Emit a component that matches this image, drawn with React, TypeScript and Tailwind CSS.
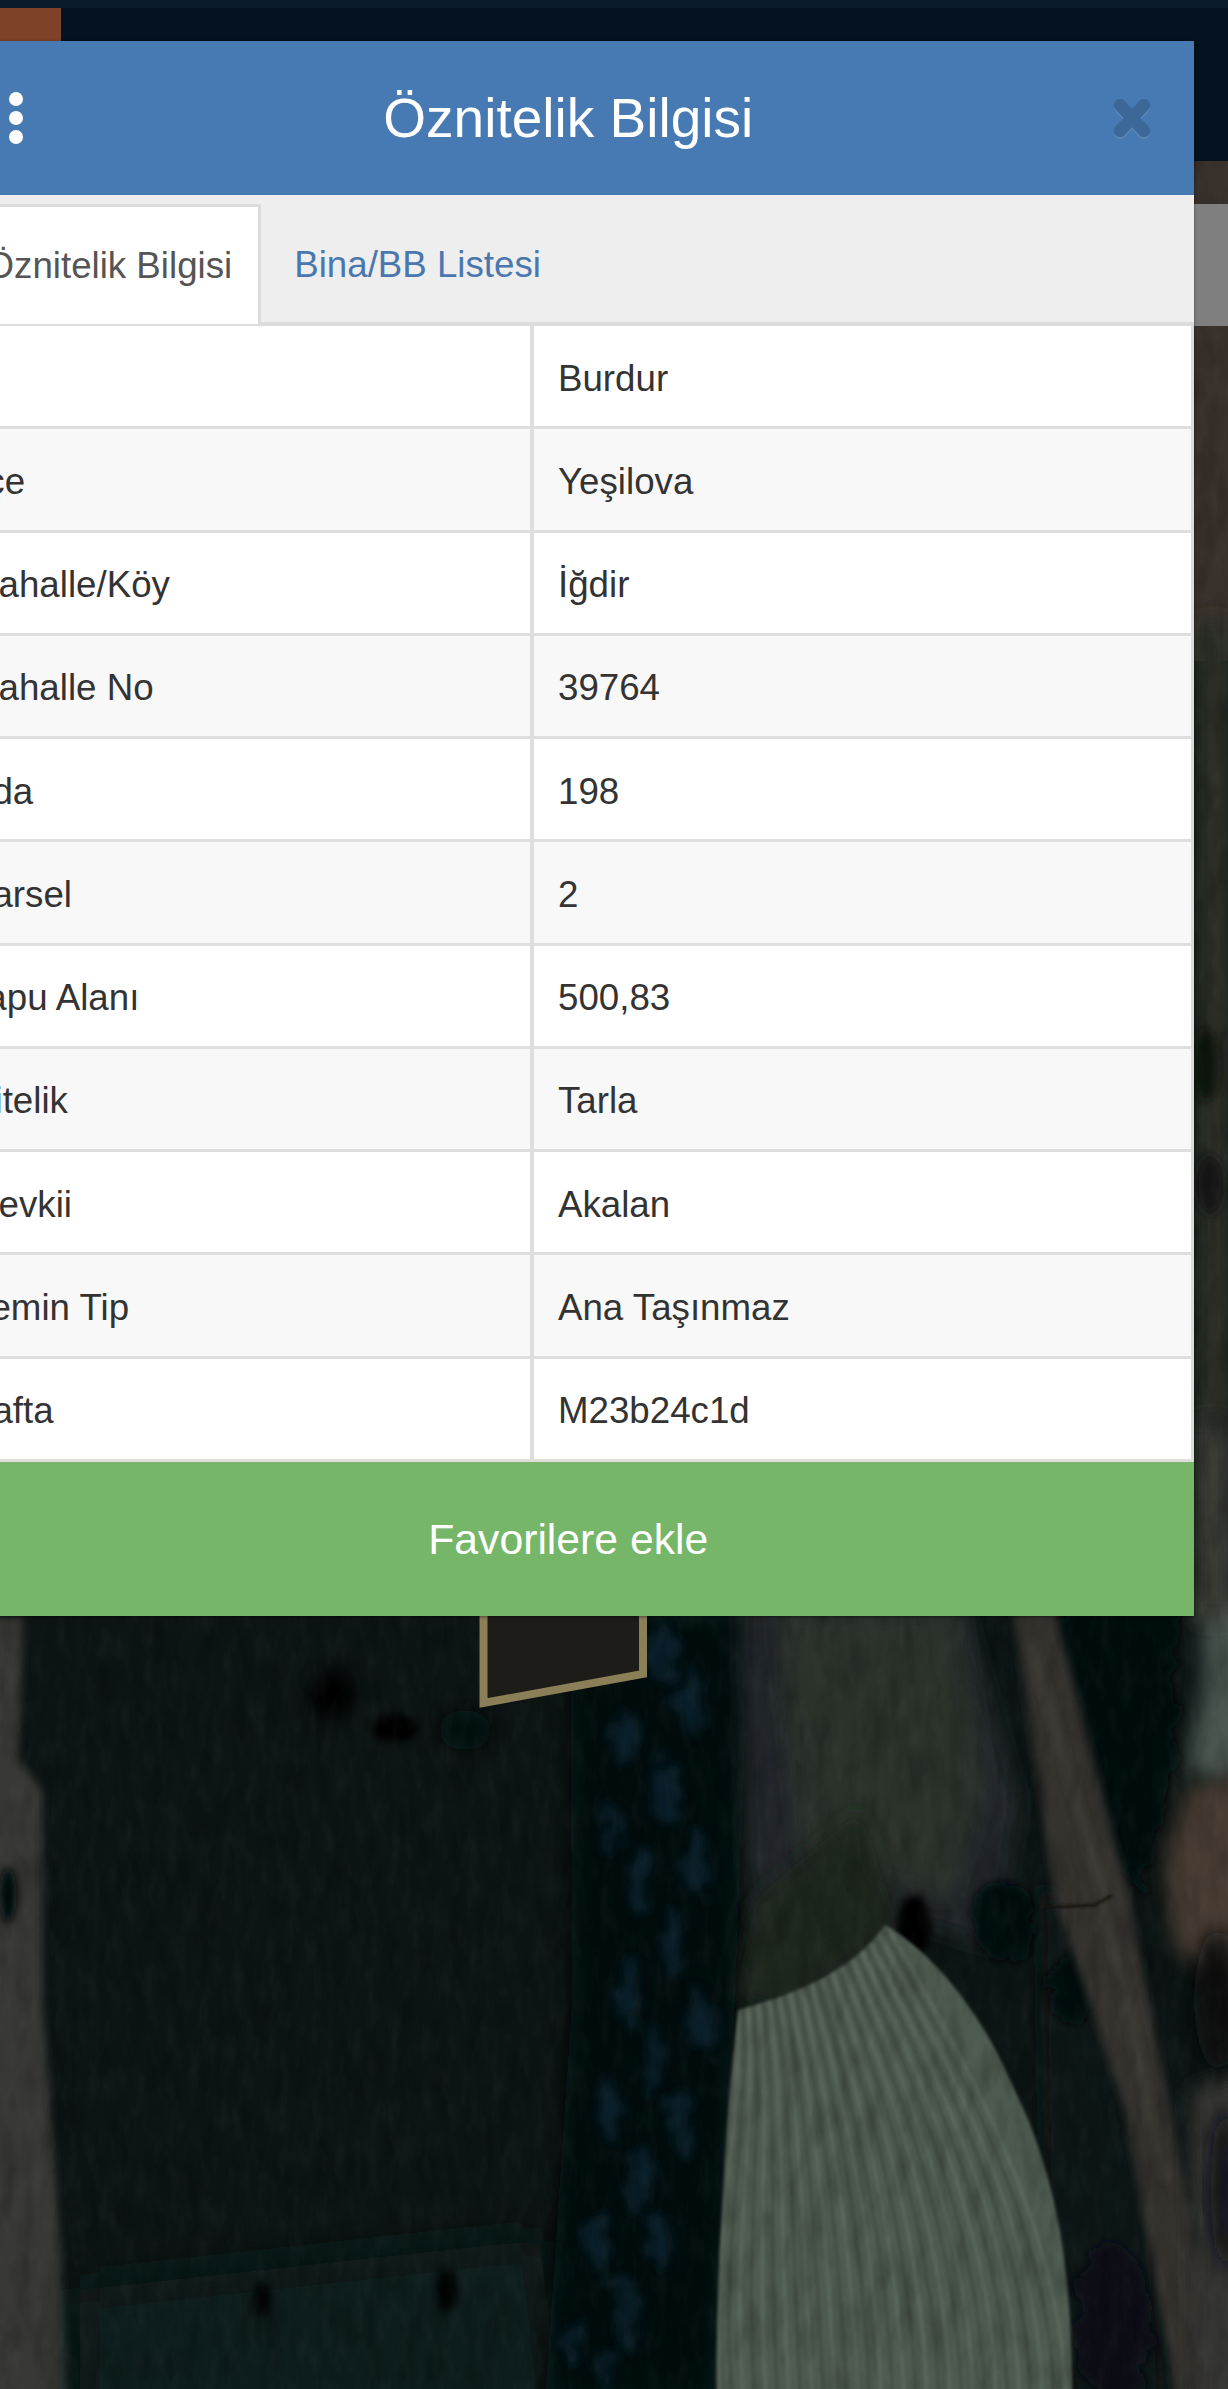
import React from "react";

const rows: [string, string][] = [
  ["İl", "Burdur"],
  ["İlçe", "Yeşilova"],
  ["Mahalle/Köy", "İğdir"],
  ["Mahalle No", "39764"],
  ["Ada", "198"],
  ["Parsel", "2"],
  ["Tapu Alanı", "500,83"],
  ["Nitelik", "Tarla"],
  ["Mevkii", "Akalan"],
  ["Zemin Tip", "Ana Taşınmaz"],
  ["Pafta", "M23b24c1d"],
];

function stripes() {
  const out: React.ReactElement[] = [];
  const n = 30;
  for (let i = 0; i <= n; i++) {
    const t = i / n;
    const sx = 738 + 150 * t;
    const sy = 2012 - 85 * t;
    const ex = 720 + 345 * t;
    const light = i % 2 === 0;
    out.push(
      <path
        key={i}
        d={`M${sx} ${sy} C${sx + 5 + 70 * t} ${sy + 130}, ${ex - 12 + 10 * t} ${2230}, ${ex} 2395`}
        fill="none"
        stroke={light ? "#5f6c62" : "#3d483f"}
        strokeWidth={light ? 3 : 3.5}
        opacity={0.7}
      />
    );
  }
  return out;
}

const treeSpots: [number, number, number, number][] = [
  [660, 1650, 14, 30], [690, 1700, 12, 34], [625, 1740, 13, 30], [665, 1790, 11, 36],
  [695, 1860, 13, 32], [640, 1880, 11, 36], [610, 1830, 9, 26], [675, 1945, 12, 34],
  [630, 1990, 12, 36], [700, 2020, 11, 30], [650, 2060, 10, 38], [610, 2110, 10, 30],
  [680, 2120, 10, 32], [640, 2180, 11, 38], [600, 2240, 12, 32], [660, 2240, 10, 30],
  [625, 2310, 11, 36], [575, 2340, 9, 28], [610, 2370, 10, 20],
];

function MapBackdrop() {
  return (
    <svg className="absolute inset-0 h-full w-full" viewBox="0 0 1228 2389" preserveAspectRatio="none">
      <defs>
        <filter id="soft" x="-30%" y="-30%" width="160%" height="160%">
          <feGaussianBlur stdDeviation="10" />
        </filter>
        <filter id="wide" x="-40%" y="-40%" width="180%" height="180%">
          <feGaussianBlur stdDeviation="22" />
        </filter>
        <filter id="softer" x="-40%" y="-40%" width="180%" height="180%">
          <feGaussianBlur stdDeviation="4" />
        </filter>
        <filter id="tiny" x="-5%" y="-5%" width="110%" height="110%">
          <feGaussianBlur stdDeviation="1.4" />
        </filter>
        <filter id="rough" x="-30%" y="-30%" width="160%" height="160%">
          <feTurbulence type="fractalNoise" baseFrequency="0.03 0.045" numOctaves={3} seed={4} result="n" />
          <feDisplacementMap in="SourceGraphic" in2="n" scale="40" />
          <feGaussianBlur stdDeviation="4" />
        </filter>
        <filter id="grain" x="0" y="0" width="100%" height="100%">
          <feTurbulence type="fractalNoise" baseFrequency="0.06 0.02" numOctaves={4} seed={9} />
          <feColorMatrix values="0 0 0 0 0  0 0 0 0 0  0 0 0 0 0  1.4 0 0 0 -0.6" />
          <feGaussianBlur stdDeviation="1.2" />
        </filter>
        <filter id="sheen" x="0" y="0" width="100%" height="100%">
          <feTurbulence type="fractalNoise" baseFrequency="0.09 0.03" numOctaves={3} seed={21} />
          <feColorMatrix values="0 0 0 0 0.6  0 0 0 0 0.65  0 0 0 0 0.62  1.6 0 0 0 -0.7" />
        </filter>
      </defs>
      <rect width="1228" height="2389" fill="#0c1514" />
      {/* left edge */}
      <path d="M-30 1616H24L18 1760L42 1790L42 2000L60 2240L68 2420H-30Z" fill="#383735" filter="url(#softer)" />
      {/* lower field */}
      <path d="M80 2290L540 2240L560 2420H80Z" fill="#111d1a" filter="url(#wide)" />
      {/* tree band */}
      <path d="M570 1616H750L735 2000L715 2400H545L572 2000Z" fill="#05090e" filter="url(#soft)" />
      <g filter="url(#rough)" fill="#112534" opacity="0.7">
        {treeSpots.map(([cx, cy, rx, ry]) => (
          <ellipse key={`${cx}-${cy}`} cx={cx} cy={cy} rx={rx} ry={ry} />
        ))}
      </g>
      {/* middle field */}
      <path d="M740 1590H960L1020 1800L1000 1950L920 1925L840 1990L765 2000L745 1860Z" fill="#20282a" filter="url(#soft)" />
      <path d="M775 1610H960L985 1790L950 1900L800 1850Z" fill="#2a302b" filter="url(#soft)" />
      <path d="M755 1900L860 1810L900 1930L790 2010L735 2000Z" fill="#1a261f" filter="url(#soft)" />
      {/* right dark */}
      <path d="M1060 1600H1180L1170 1780L1140 1890L1040 1790Z" fill="#060a0e" filter="url(#rough)" />
      <path d="M1040 1880L1140 1960L1165 2420H1075L1045 2200Z" fill="#111919" filter="url(#soft)" />
      <ellipse cx="914" cy="1925" rx="18" ry="30" fill="#040505" filter="url(#softer)" />
      <ellipse cx="1005" cy="1920" rx="30" ry="42" fill="#05070b" filter="url(#rough)" />
      <ellipse cx="1112" cy="2320" rx="40" ry="75" fill="#070a13" filter="url(#rough)" />
      <ellipse cx="1075" cy="1990" rx="32" ry="34" fill="#05080c" filter="url(#rough)" />
      {/* road */}
      <path d="M1012 1600H1052L1130 1900L1172 2120L1228 2420H1180L1125 2110L1055 1900Z" fill="#35332e" filter="url(#softer)" />
      <path d="M1030 1640L1105 1900L1165 2180" stroke="#423f37" strokeWidth="6" fill="none" filter="url(#softer)" />
      <path d="M1040 1908L1095 1905L1112 1895" stroke="#17150f" strokeWidth="3" fill="none" filter="url(#tiny)" />
      {/* right edge fields */}
      <path d="M1200 1600H1250V1790L1185 1770L1205 1680Z" fill="#4a544f" filter="url(#soft)" />
      <path d="M1185 1790L1250 1770V2000L1175 1950L1165 1860Z" fill="#463b33" filter="url(#soft)" />
      <ellipse cx="1218" cy="2000" rx="24" ry="70" fill="#070b10" filter="url(#soft)" />
      <path d="M1190 2090L1250 2070V2420H1195Z" fill="#363632" filter="url(#soft)" />
      <ellipse cx="1225" cy="2190" rx="14" ry="80" fill="#0b0e13" filter="url(#soft)" />
      {/* striped field */}
      <clipPath id="strip">
        <path d="M885 1925C930 1950 980 2010 1010 2080C1050 2160 1075 2250 1072 2420H716C716 2280 725 2120 738 2010C790 1995 850 1975 885 1925Z" />
      </clipPath>
      <g filter="url(#tiny)">
        <g clipPath="url(#strip)">
          <rect x="700" y="1900" width="400" height="520" fill="#4e5a50" />
          {stripes()}
        </g>
      </g>
      {/* right strip */}
      <rect x="1194" y="161" width="40" height="500" fill="#38302a" />
      <rect x="1194" y="620" width="40" height="800" fill="#2c2d28" filter="url(#soft)" />
      <ellipse cx="1205" cy="1065" rx="14" ry="36" fill="#0e1210" filter="url(#softer)" />
      <ellipse cx="1210" cy="1185" rx="14" ry="30" fill="#181713" filter="url(#softer)" />
      <rect x="1194" y="1420" width="40" height="200" fill="#3a3a36" filter="url(#soft)" />
      {/* dark trees above field */}
      <ellipse cx="332" cy="1695" rx="24" ry="26" fill="#030504" filter="url(#soft)" />
      <ellipse cx="395" cy="1728" rx="24" ry="14" fill="#030504" filter="url(#softer)" />
      <ellipse cx="465" cy="1730" rx="26" ry="20" fill="#050908" filter="url(#soft)" />
      <ellipse cx="8" cy="1895" rx="9" ry="28" fill="#050707" filter="url(#softer)" />
      <ellipse cx="262" cy="2300" rx="8" ry="18" fill="#040606" filter="url(#softer)" />
      <ellipse cx="447" cy="2290" rx="10" ry="22" fill="#040606" filter="url(#softer)" />
      <rect width="1228" height="2389" filter="url(#grain)" opacity="0.3" />
      <rect width="1228" height="2389" filter="url(#sheen)" opacity="0.05" />
      {/* parcel outline */}
      <path d="M483.5 1600V1703L643 1674V1600" fill="#1e1c18" stroke="#8b7f57" strokeWidth="8" />
    </svg>
  );
}

export default function App() {
  return (
    <div className="relative h-[2389px] w-[1228px] overflow-hidden bg-[#0c1514] font-['Liberation_Sans',Arial,sans-serif]">
      <MapBackdrop />

      <div className="absolute inset-x-0 top-0 h-[161px] border-t-[8px] border-[#0a1b2b] bg-[#03121e]">
        <div className="h-[33px] w-[61px] bg-[#7d4228]" />
      </div>
      <div className="absolute right-0 top-[204px] h-[122px] w-[35px] bg-[#7f7f7f]" />

      <div className="relative ml-[-57px] w-[1250.5px] pt-[41px]">
        <div className="shadow-[0_1px_3px_rgba(0,0,0,0.45)]">
          <header className="grid h-[154px] grid-cols-[1fr_auto_1fr] items-center bg-[#4779b2]">
            <div className="flex flex-col gap-[5px] pl-[66px]">
              <span className="h-[14px] w-[14px] rounded-full bg-white" />
              <span className="h-[14px] w-[14px] rounded-full bg-white" />
              <span className="h-[14px] w-[14px] rounded-full bg-white" />
            </div>
            <h1 className="text-[55px] font-normal leading-none text-white">Öznitelik Bilgisi</h1>
            <div className="flex justify-end pr-[42px]">
              <svg viewBox="0 0 40 42" className="h-[42px] w-[40px] drop-shadow-[0_2px_0_#5b87b9]">
                <path d="M8 8L32 34M32 8L8 34" stroke="#3c6898" strokeWidth="12.5" strokeLinecap="round" fill="none" />
              </svg>
            </div>
          </header>

          <div className="flex h-[131px] items-end border-b-[4px] border-[#dcdcdc] bg-[#eeeeef] pl-[15.5px]">
            <div className="mb-[-2px] flex h-[120px] items-center border-r-[3px] border-t-[3px] border-[#dcdcdc] bg-white pl-[27px] pr-[25.5px] text-[36.7px] text-[#555555]">
              Öznitelik Bilgisi
            </div>
            <div className="flex h-[117px] items-center pl-[33.5px] pt-[3px] text-[36.7px] text-[#4a78ae]">Bina/BB Listesi</div>
          </div>

          <div className="border-r-[3px] border-[#dcdcdc] bg-white">
            {rows.map(([label, value], i) => (
              <div
                key={label}
                className={`grid h-[103.25px] grid-cols-[587px_1fr] border-b-[3.5px] border-[#dedede] text-[36.7px] text-[#333333] ${
                  i % 2 === 1 ? "bg-[#f8f8f8]" : "bg-white"
                }`}
              >
                <div className="flex items-center pl-[25px] pt-[4px]">{label}</div>
                <div className="flex items-center border-l-[4px] border-[#dedede] pl-[24px] pt-[4px]">{value}</div>
              </div>
            ))}
          </div>

          <button className="block h-[154px] w-full bg-[#76b668] text-center text-[42.7px] text-white">
            Favorilere ekle
          </button>
        </div>
      </div>
    </div>
  );
}
